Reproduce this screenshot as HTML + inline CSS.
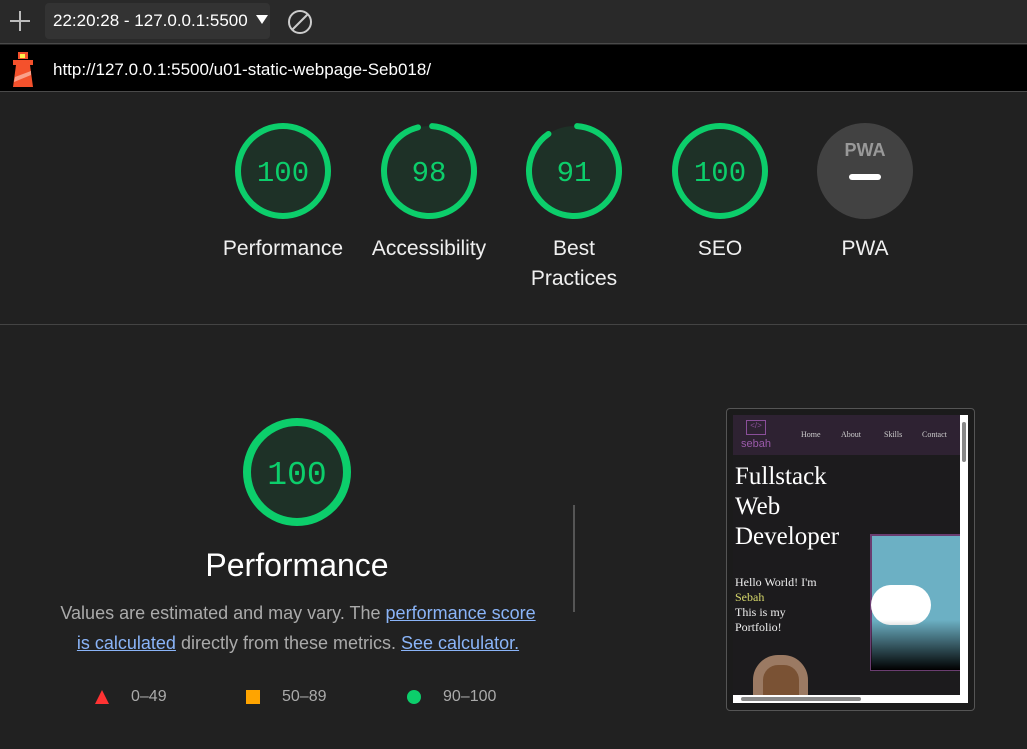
<!DOCTYPE html>
<html><head><meta charset="utf-8"><style>
*{margin:0;padding:0;box-sizing:border-box}
body{width:1027px;height:749px;background:#212121;font-family:"Liberation Sans",sans-serif;position:relative;overflow:hidden;color:#eee}
.abs{position:absolute}
.lbl{position:absolute;width:140px;text-align:center;font-size:21px;color:#f0f0f0;line-height:30px}
.num{font-family:"Liberation Mono",monospace;fill:#0cce6b}
.ff{font-family:"Liberation Serif",serif}
</style></head><body>
<div class="abs" style="left:0;top:0;width:1027px;height:44px;background:#292929;border-bottom:1px solid #4a4a4a"></div>
<svg class="abs" style="left:8px;top:9px" width="24" height="24"><path d="M12 2v20M2 12h20" stroke="#bbb" stroke-width="2"/></svg>
<div class="abs" style="left:45px;top:3px;width:225px;height:36px;background:#333;border-radius:4px"></div>
<div class="abs" style="left:53px;top:11px;font-size:17px;color:#fff">22:20:28 - 127.0.0.1:5500</div>
<svg class="abs" style="left:255px;top:14px" width="14" height="12"><path d="M1 1h12L7 10z" fill="#fff"/></svg>
<svg class="abs" style="left:286px;top:8px" width="28" height="28"><circle cx="14" cy="14" r="11" stroke="#ccc" stroke-width="2" fill="none"/><path d="M6 22L22 6" stroke="#ccc" stroke-width="2"/></svg>
<div class="abs" style="left:0;top:45px;width:1027px;height:47px;background:#000;border-bottom:1px solid #4a4a4a"></div>
<svg class="abs" style="left:10px;top:50px" width="26" height="38"><rect x="8" y="2" width="10" height="7" fill="#f4512c"/><rect x="10" y="4" width="5" height="4" fill="#fff04d"/><rect x="3" y="10" width="20" height="5" fill="#f4512c"/><path d="M6 15h14l3 22H3z" fill="#f4512c"/><path d="M5 27l16-6v4L4 32z" fill="#f9a08a"/></svg>
<div class="abs" style="left:53px;top:60px;font-size:17px;color:#fff">http://127.0.0.1:5500/u01-static-webpage-Seb018/</div>

<svg class="abs" style="left:0;top:100px" width="1027" height="140">
<g fill="#1e3127" stroke-width="6" stroke-linecap="round">
<circle cx="283" cy="71" r="45" stroke="#0cce6b"/>
<circle cx="429" cy="71" r="45" stroke="none"/>
<circle cx="429" cy="71" r="45" stroke="#0cce6b" fill="none" stroke-dasharray="268 15" transform="rotate(-86 429 71)"/>
<circle cx="574" cy="71" r="45" stroke="none"/>
<circle cx="574" cy="71" r="45" stroke="#0cce6b" fill="none" stroke-dasharray="252 31" transform="rotate(-86 574 71)"/>
<circle cx="720" cy="71" r="45" stroke="#0cce6b"/>
</g>
<circle cx="865" cy="71" r="48" fill="#424242"/>
<text x="865" y="56" text-anchor="middle" font-size="18" font-weight="bold" fill="#999" font-family="Liberation Sans">PWA</text>
<rect x="849" y="74" width="32" height="6" rx="3" fill="#fff"/>
<g class="num" font-size="29" text-anchor="middle">
<text x="283" y="81">100</text><text x="429" y="81">98</text><text x="574" y="81">91</text><text x="720" y="81">100</text></g>
</svg>
<div class="lbl" style="left:213px;top:234px">Performance</div>
<div class="lbl" style="left:359px;top:234px">Accessibility</div>
<div class="lbl" style="left:504px;top:234px">Best<br>Practices</div>
<div class="lbl" style="left:650px;top:234px">SEO</div>
<div class="lbl" style="left:795px;top:234px">PWA</div>
<div class="abs" style="left:0;top:324px;width:1027px;height:1px;background:#444"></div>

<svg class="abs" style="left:237px;top:412px" width="120" height="120"><circle cx="60" cy="60" r="50" fill="#1e3127" stroke="#0cce6b" stroke-width="8"/><text class="num" x="60" y="72" text-anchor="middle" font-size="33">100</text></svg>
<div class="abs" style="left:147px;top:547px;width:300px;text-align:center;font-size:32px;color:#fff">Performance</div>
<div class="abs" style="left:48px;top:598px;width:500px;text-align:center;font-size:18px;line-height:30px;color:#aaa">Values are estimated and may vary. The <span style="color:#8ab4f8;text-decoration:underline">performance score<br>is calculated</span> directly from these metrics. <span style="color:#8ab4f8;text-decoration:underline">See calculator.</span></div>
<svg class="abs" style="left:94px;top:689px" width="16" height="16"><path d="M8 1L15 15H1z" fill="#f33"/></svg>
<div class="abs" style="left:131px;top:688px;font-size:16px;color:#aaa">0–49</div>
<div class="abs" style="left:246px;top:690px;width:14px;height:14px;background:#ffa400"></div>
<div class="abs" style="left:282px;top:688px;font-size:16px;color:#aaa">50–89</div>
<div class="abs" style="left:407px;top:690px;width:14px;height:14px;border-radius:50%;background:#0cce6b"></div>
<div class="abs" style="left:443px;top:688px;font-size:16px;color:#aaa">90–100</div>
<div class="abs" style="left:573px;top:505px;width:2px;height:107px;background:#555"></div>

<div class="abs" style="left:726px;top:408px;width:249px;height:303px;border:1px solid #555;border-radius:4px;background:#1b1b1b"></div>
<div class="abs" style="left:733px;top:415px;width:235px;height:288px;background:#fff"></div>
<div class="abs" style="left:733px;top:415px;width:227px;height:280px;background:#1c1b1d;overflow:hidden">
 <div class="abs" style="left:0;top:0;width:227px;height:40px;background:#2e2232"></div>
 <div class="abs" style="left:13px;top:5px;width:20px;height:15px;border:1px solid #8a4f9a;font-size:8px;color:#8a4f9a;text-align:center">&lt;/&gt;</div>
 <div class="abs" style="left:8px;top:23px;font-size:11px;color:#9a5aaa">sebah</div>
 <div class="abs ff" style="left:68px;top:15px;font-size:8px;color:#ccc">Home</div>
 <div class="abs ff" style="left:108px;top:15px;font-size:8px;color:#ccc">About</div>
 <div class="abs ff" style="left:151px;top:15px;font-size:8px;color:#ccc">Skills</div>
 <div class="abs ff" style="left:189px;top:15px;font-size:8px;color:#ccc">Contact</div>
 <div class="abs ff" style="left:2px;top:47px;font-size:25px;line-height:30px;color:#fff">Fullstack<br>Web<br>Developer</div>
 <div class="abs ff" style="left:2px;top:160px;font-size:12px;line-height:15px;color:#eee">Hello World! I'm<br><span style="color:#d6d86a">Sebah</span><br>This is my<br>Portfolio!</div>
 <div class="abs" style="left:137px;top:119px;width:95px;height:137px;background:#6cb0c4;border:2px solid #6a3d70"></div>
 <div class="abs" style="left:138px;top:170px;width:60px;height:40px;background:#fff;border-radius:20px"></div>
 <div class="abs" style="left:138px;top:205px;width:90px;height:50px;background:linear-gradient(transparent,#000)"></div>
 <div class="abs" style="left:20px;top:240px;width:55px;height:45px;background:#9b7a63;border-radius:25px 25px 0 0"></div>
 <div class="abs" style="left:30px;top:250px;width:36px;height:35px;background:#7a5234;border-radius:15px 15px 0 0"></div>
</div>
<div class="abs" style="left:962px;top:422px;width:4px;height:40px;background:#888;border-radius:2px"></div>
<div class="abs" style="left:741px;top:697px;width:120px;height:4px;background:#888;border-radius:2px"></div>
</body></html>
